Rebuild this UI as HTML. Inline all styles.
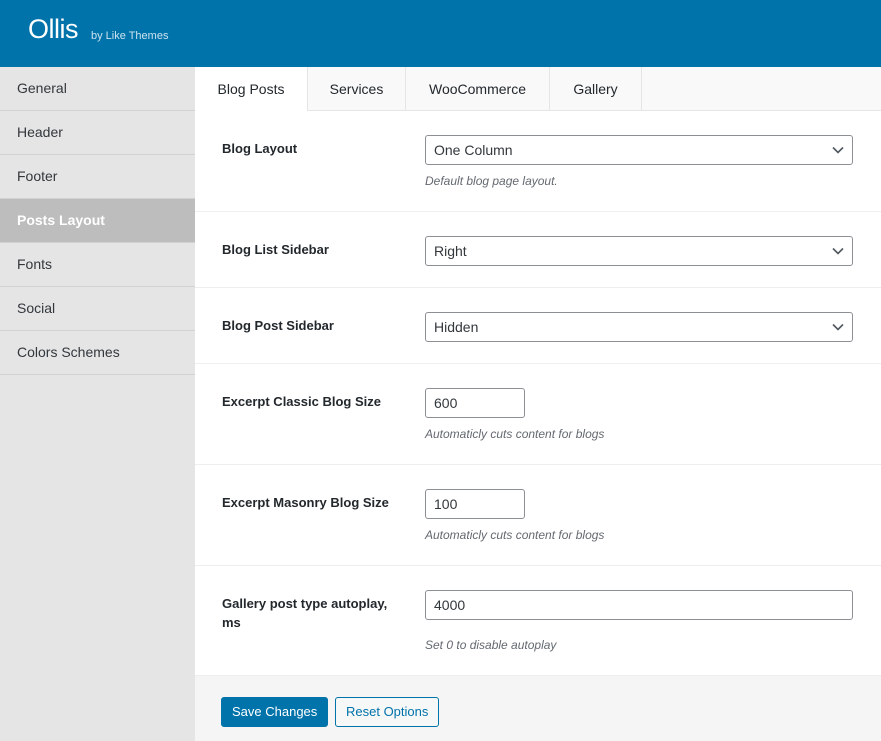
<!DOCTYPE html>
<html><head><meta charset="utf-8"><style>
*{box-sizing:border-box;margin:0;padding:0}
body{width:881px;height:741px;overflow:hidden;font-family:"Liberation Sans",sans-serif;font-size:14px;color:#23282d;background:#fff;position:relative}
.hdr{position:absolute;left:0;top:0;width:881px;height:67px;background:#0073aa;color:#fff}
.hdr .t{position:absolute;left:28px;top:14px;font-size:27px;font-weight:300;letter-spacing:-0.5px}
.hdr .s{position:absolute;left:91px;top:30px;font-size:11px;color:#cde3ee}
.side{position:absolute;left:0;top:67px;width:195px;height:674px;background:#e5e5e5}
.side div{height:44px;line-height:43px;padding-left:17px;border-bottom:1px solid #d2d2d2;color:#32373c;font-size:14px}
.side div.a{background:#bdbdbd;color:#fff;font-weight:bold}
.tabs{position:absolute;left:195px;top:67px;width:686px;height:44px;background:#f9f9f9;border-bottom:1px solid #e5e5e5}
.tab{position:absolute;top:0;height:44px;line-height:44px;text-align:center;border-right:1px solid #e5e5e5;font-size:14px;color:#23282d}
.tab.a{background:#fff;height:45px}
.row{position:absolute;left:195px;width:686px;border-bottom:1px solid #eee;background:#fff}
.lbl{position:absolute;left:27px;font-weight:bold;font-size:13px;color:#23282d;line-height:19px}
.sel,.inp{position:absolute;left:230px;height:30px;border:1px solid #8c8f94;border-radius:3px;background:#fff;font-size:14px;line-height:28px;padding-left:8px;color:#32373c}
.sel{width:428px}
.sel svg{position:absolute;right:8px;top:10px}
.d{position:absolute;left:230px;font-style:italic;font-size:12px;color:#646970}
.foot{position:absolute;left:195px;top:676px;width:686px;height:65px;background:#f5f5f5}
.btn{position:absolute;top:21px;height:30px;line-height:28px;border-radius:3px;font-size:13px;padding:0 10px}
</style></head><body>
<div class="hdr"><span class="t">Ollis</span><span class="s">by Like Themes</span></div>
<div class="side">
<div>General</div><div>Header</div><div>Footer</div><div class="a">Posts Layout</div><div>Fonts</div><div>Social</div><div>Colors Schemes</div>
</div>
<div class="tabs">
<div class="tab a" style="left:0;width:113px">Blog Posts</div>
<div class="tab" style="left:113px;width:98px">Services</div>
<div class="tab" style="left:211px;width:144px">WooCommerce</div>
<div class="tab" style="left:355px;width:92px">Gallery</div>
</div>

<div class="row" style="top:111px;height:101px">
<div class="lbl" style="top:28px">Blog Layout</div>
<div class="sel" style="top:24px">One Column<svg width="12" height="8" viewBox="0 0 12 8"><path d="M1 1.5l5 5 5-5" fill="none" stroke="#50575e" stroke-width="1.6"/></svg></div>
<div class="d" style="top:63px">Default blog page layout.</div>
</div>
<div class="row" style="top:212px;height:76px">
<div class="lbl" style="top:28px">Blog List Sidebar</div>
<div class="sel" style="top:24px">Right<svg width="12" height="8" viewBox="0 0 12 8"><path d="M1 1.5l5 5 5-5" fill="none" stroke="#50575e" stroke-width="1.6"/></svg></div>
</div>
<div class="row" style="top:288px;height:76px">
<div class="lbl" style="top:28px">Blog Post Sidebar</div>
<div class="sel" style="top:24px">Hidden<svg width="12" height="8" viewBox="0 0 12 8"><path d="M1 1.5l5 5 5-5" fill="none" stroke="#50575e" stroke-width="1.6"/></svg></div>
</div>
<div class="row" style="top:364px;height:101px">
<div class="lbl" style="top:28px">Excerpt Classic Blog Size</div>
<div class="inp" style="top:24px;width:100px">600</div>
<div class="d" style="top:63px">Automaticly cuts content for blogs</div>
</div>
<div class="row" style="top:465px;height:101px">
<div class="lbl" style="top:28px">Excerpt Masonry Blog Size</div>
<div class="inp" style="top:24px;width:100px">100</div>
<div class="d" style="top:63px">Automaticly cuts content for blogs</div>
</div>
<div class="row" style="top:566px;height:110px">
<div class="lbl" style="top:28px">Gallery post type autoplay,<br>ms</div>
<div class="inp" style="top:24px;width:428px">4000</div>
<div class="d" style="top:72px">Set 0 to disable autoplay</div>
</div>
<div class="foot">
<div class="btn" style="left:26px;background:#0073aa;color:#fff;border:1px solid #0073aa">Save Changes</div>
<div class="btn" style="left:140px;background:#f6f7f7;color:#0073aa;border:1px solid #0073aa">Reset Options</div>
</div>
</body></html>
